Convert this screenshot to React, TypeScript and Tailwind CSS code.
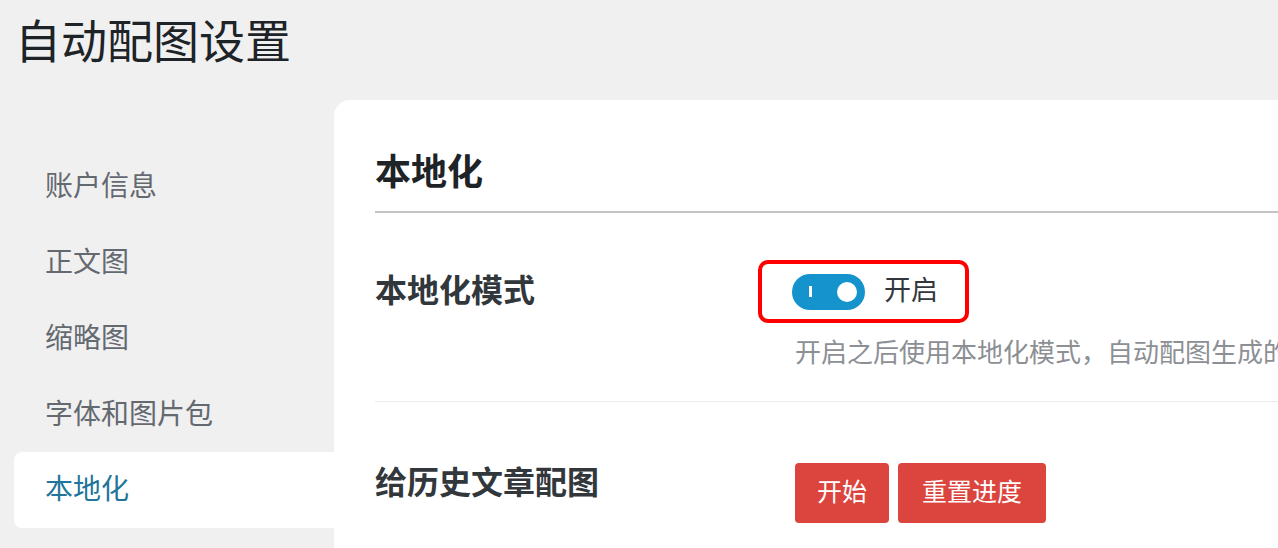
import React from 'react';

const navItems = ['账户信息', '正文图', '缩略图', '字体和图片包', '本地化'];

const font = "font-['Liberation_Sans','Noto_Sans_CJK_SC',sans-serif]";

const Toggle: React.FC<{ on: boolean }> = ({ on }) => (
  <div
    className={`relative flex items-center w-[73px] h-[36px] rounded-full ${
      on ? 'bg-[#1593cd]' : 'bg-[#c3c4c7]'
    }`}
  >
    <span className="ml-[17px] w-[3px] h-[11px] bg-white" />
    <span className="ml-auto mr-[8px] w-[20px] h-[20px] rounded-full bg-white" />
  </div>
);

const App: React.FC = () => {
  const active = '本地化';

  return (
    <div className={`w-[1278px] h-[548px] overflow-hidden bg-[#f0f0f0] ${font}`}>
      <div className="h-[100px] pl-[15px] pt-[19px]">
        <h1 className="text-[46px] leading-none text-[#1d2327]">自动配图设置</h1>
      </div>

      <div className="flex h-[448px]">
        <nav className="w-[334px] shrink-0 pt-[49px]">
          {navItems.map((item, i) => (
            <div
              key={item}
              className={`h-[76px] flex items-center text-[28px] ${
                i === navItems.length - 1 ? '-mt-[1px]' : ''
              } ${
                item === active
                  ? 'ml-[14px] pl-[31px] bg-white rounded-l-[8px] text-[#21759b]'
                  : 'pl-[45px] text-[#646970]'
              }`}
            >
              {item}
            </div>
          ))}
        </nav>

        <main className="flex-1 bg-white rounded-tl-[16px] pl-[41px]">
          <div className="pt-[50px] pb-[15px] border-b-2 border-[#c4c4c4]">
            <h2 className="text-[36px] leading-[46px] font-bold text-[#1d2327]">本地化</h2>
          </div>

          <div className="flex items-start border-b border-[#ececec] pb-[30px]">
            <div className="w-[420px] shrink-0 mt-[47px] leading-[63px] text-[32px] font-bold text-[#32373c]">
              本地化模式
            </div>
            <div className="flex flex-col items-start min-w-0">
              <div className="mt-[47px] -ml-[37px] h-[63px] inline-flex items-center gap-[19px] pl-[30px] pr-[27px] border-4 border-[#ff0000] rounded-[10px]">
                <Toggle on />
                <span className="text-[27px] text-[#32373c]">开启</span>
              </div>
              <p className="mt-[12px] leading-[36px] text-[26px] text-[#8c8f94] whitespace-nowrap">
                开启之后使用本地化模式，自动配图生成的图片将保存在本地服务器中
              </p>
            </div>
          </div>

          <div className="flex items-start">
            <div className="w-[420px] shrink-0 mt-[61px] leading-[40px] text-[32px] font-bold text-[#32373c]">
              给历史文章配图
            </div>
            <div className="mt-[61px] flex gap-[9px]">
              <button
                type="button"
                className="h-[60px] px-[22px] rounded-[4px] bg-[#dc443e] text-white text-[25px]"
              >
                开始
              </button>
              <button
                type="button"
                className="h-[60px] px-[24px] rounded-[4px] bg-[#dc443e] text-white text-[25px]"
              >
                重置进度
              </button>
            </div>
          </div>
        </main>
      </div>
    </div>
  );
};

export default App;
